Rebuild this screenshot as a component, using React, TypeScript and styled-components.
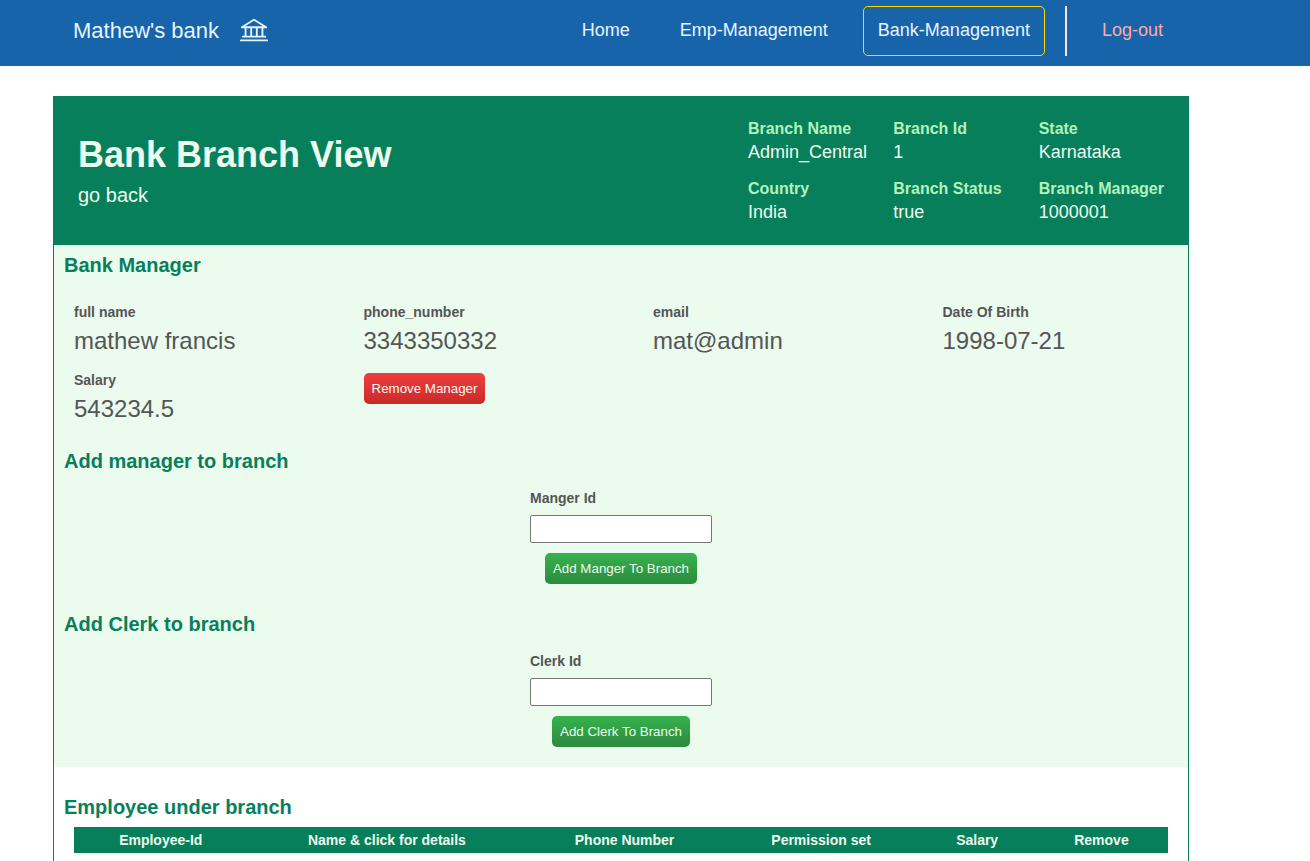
import React from "react";
import styled, { createGlobalStyle } from "styled-components";
import { PiBank } from "react-icons/pi";

const GlobalStyle = createGlobalStyle`
  *, *::before, *::after { box-sizing: border-box; }
  body {
    margin: 0;
    background: #fff;
    color: #555;
    font-family: Arial, "Liberation Sans", sans-serif;
  }
  h1, h2, p, dl, dt, dd { margin: 0; }
`;

const TopBar = styled.header`
  display: flex;
  align-items: center;
  justify-content: space-between;
  padding: 6px 132px 10px 73px;
  background: #1864ab;
`;

const Brand = styled.a`
  display: flex;
  align-items: center;
  gap: 20px;
  color: #e7f5ff;
  font-size: 22px;
  line-height: 30px;
  text-decoration: none;
`;

const Nav = styled.nav`
  display: flex;
  gap: 20px;
`;

const NavLink = styled.a<{ $active?: boolean; $danger?: boolean }>`
  padding: 11px 14px 13px;
  border: 1px solid ${(p) => (p.$active ? "#ffd700" : "transparent")};
  border-radius: 5px;
  color: ${(p) => (p.$danger ? "#ffa8a8" : "#e7f5ff")};
  font-size: 18px;
  line-height: 24px;
  text-decoration: none;
`;

const Divider = styled.span`
  width: 2px;
  background: #f8e8e8;
`;

const Card = styled.main`
  margin: 30px 121px 30px 53px;
  border: 1px solid #087f5b;
`;

const Banner = styled.section`
  display: flex;
  align-items: center;
  justify-content: space-between;
  padding: 21px 24px;
  background: #087f5b;
  color: #ebfbee;
`;

const BannerTitle = styled.div`
  display: flex;
  flex-direction: column;
  align-items: flex-start;
  gap: 8px;
`;

const Heading = styled.h1`
  font-size: 36px;
  line-height: 40px;
`;

const BackLink = styled.a`
  color: inherit;
  font-size: 20px;
  line-height: 24px;
  text-decoration: none;
`;

const BranchFacts = styled.dl`
  display: grid;
  grid-template-columns: repeat(3, 1fr);
  gap: 14px 20px;
  font-size: 18px;
  line-height: 24px;

  dt {
    color: #b2f2bb;
    font-size: 16px;
    font-weight: 700;
    line-height: 22px;
  }
`;

const ManagePanel = styled.div`
  padding: 8px 10px 20px;
  background: #ebfbee;
`;

const SectionTitle = styled.h2`
  color: #087f5b;
  font-size: 20px;
  line-height: 24px;
`;

const ManagerFacts = styled.dl`
  display: grid;
  grid-template-columns: repeat(4, 1fr);
  align-items: start;
  justify-items: start;
  gap: 16px 64px;
  padding: 28px 10px 24px;
  font-size: 24px;
  line-height: 32px;

  dt {
    margin-bottom: 6px;
    font-size: 14px;
    font-weight: 700;
    line-height: 14px;
  }
`;

const Button = styled.button<{ $tone: "red" | "green" }>`
  padding: 8px;
  border: 0;
  border-radius: 5px;
  background: ${(p) =>
    p.$tone === "red"
      ? "linear-gradient(#f03e3e, #c92a2a)"
      : "linear-gradient(#37b24d, #2b8a3e)"};
  color: ${(p) => (p.$tone === "red" ? "#fff5f5" : "#ebfbee")};
  font-family: inherit;
  cursor: pointer;
`;

const AssignForm = styled.form`
  display: flex;
  flex-direction: column;
  align-items: center;
  gap: 10px;
  padding: 16px 0 28px;

  &:last-child {
    padding-bottom: 0;
  }
`;

const Field = styled.label`
  display: flex;
  flex-direction: column;
  gap: 8px;
  font-size: 14px;
  font-weight: 700;
  line-height: 18px;
`;

const TextInput = styled.input`
  width: 182px;
  height: 28px;
  padding: 4px;
  border: 1px solid #767676;
  border-radius: 2px;
  background: #fff;
  font: inherit;
`;

const Employees = styled.section`
  padding: 28px 10px;
`;

const TableWrap = styled.div`
  padding: 8px 10px 10px;
`;

const EmployeeTable = styled.table`
  width: 100%;
  border-collapse: collapse;
  font-size: 14px;
  line-height: 16px;

  th {
    padding: 5px 20px;
    background: #087f5b;
    color: #ebfbee;
    white-space: nowrap;
  }
`;

const branch = [
  ["Branch Name", "Admin_Central"],
  ["Branch Id", "1"],
  ["State", "Karnataka"],
  ["Country", "India"],
  ["Branch Status", "true"],
  ["Branch Manager", "1000001"],
];

const manager = [
  ["full name", "mathew francis"],
  ["phone_number", "3343350332"],
  ["email", "mat@admin"],
  ["Date Of Birth", "1998-07-21"],
  ["Salary", "543234.5"],
];

const columns = [
  "Employee-Id",
  "Name & click for details",
  "Phone Number",
  "Permission set",
  "Salary",
  "Remove",
];

function Facts({ items }: { items: string[][] }) {
  return (
    <>
      {items.map(([label, value]) => (
        <div key={label}>
          <dt>{label}</dt>
          <dd>{value}</dd>
        </div>
      ))}
    </>
  );
}

function Assign({ label, action }: { label: string; action: string }) {
  return (
    <AssignForm onSubmit={(e) => e.preventDefault()}>
      <Field>
        {label}
        <TextInput type="text" />
      </Field>
      <Button type="submit" $tone="green">
        {action}
      </Button>
    </AssignForm>
  );
}

export default function App() {
  return (
    <>
      <GlobalStyle />
      <TopBar>
        <Brand href="#">
          Mathew's bank
          <PiBank size={30} aria-hidden />
        </Brand>
        <Nav>
          <NavLink href="#">Home</NavLink>
          <NavLink href="#">Emp-Management</NavLink>
          <NavLink href="#" $active>
            Bank-Management
          </NavLink>
          <Divider />
          <NavLink href="#" $danger>
            Log-out
          </NavLink>
        </Nav>
      </TopBar>
      <Card>
        <Banner>
          <BannerTitle>
            <Heading>Bank Branch View</Heading>
            <BackLink href="#">go back</BackLink>
          </BannerTitle>
          <BranchFacts>
            <Facts items={branch} />
          </BranchFacts>
        </Banner>
        <ManagePanel>
          <SectionTitle>Bank Manager</SectionTitle>
          <ManagerFacts>
            <Facts items={manager} />
            <Button type="button" $tone="red">
              Remove Manager
            </Button>
          </ManagerFacts>
          <SectionTitle>Add manager to branch</SectionTitle>
          <Assign label="Manger Id" action="Add Manger To Branch" />
          <SectionTitle>Add Clerk to branch</SectionTitle>
          <Assign label="Clerk Id" action="Add Clerk To Branch" />
        </ManagePanel>
        <Employees>
          <SectionTitle>Employee under branch</SectionTitle>
          <TableWrap>
            <EmployeeTable>
              <thead>
                <tr>
                  {columns.map((name) => (
                    <th key={name} scope="col">
                      {name}
                    </th>
                  ))}
                </tr>
              </thead>
            </EmployeeTable>
          </TableWrap>
        </Employees>
      </Card>
    </>
  );
}
